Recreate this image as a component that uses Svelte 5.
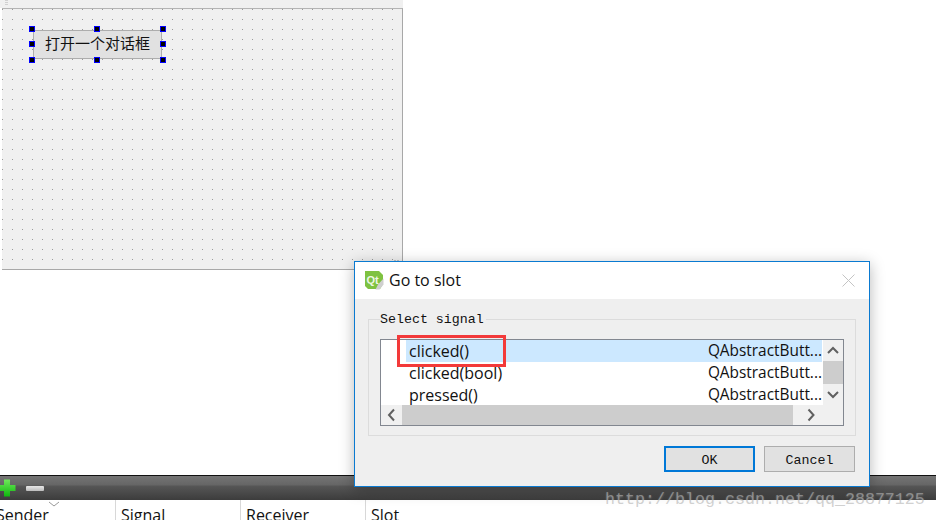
<script>
  const rows = [
    { name: 'clicked()', cls: 'QAbstractButt...', selected: true },
    { name: 'clicked(bool)', cls: 'QAbstractButt...', selected: false },
    { name: 'pressed()', cls: 'QAbstractButt...', selected: false }
  ];
  const handles = ['tl', 'tc', 'tr', 'ml', 'mr', 'bl', 'bc', 'br'];
  const columns = ['Sender', 'Signal', 'Receiver', 'Slot'];
</script>

<div class="page">
  <main class="canvas">
    <section class="designer">
      <div class="strip"><span class="grip"></span></div>
      <div class="form">
        <div class="widget">
          <button class="push">打开一个对话框</button>
          {#each handles as h}
            <span class="handle {h}"></span>
          {/each}
        </div>
        <span class="resize"></span>
      </div>
    </section>
  </main>

  <div class="toolbar">
    <svg class="plus" width="18" height="18" viewBox="0 0 18 18">
      <defs>
        <linearGradient id="gr" x1="0" y1="0" x2="0" y2="1">
          <stop offset="0" stop-color="#6fe85a" />
          <stop offset="1" stop-color="#0fb80f" />
        </linearGradient>
      </defs>
      <path d="M6 0.500h6v5.500h5.500v6H12v5.500H6V12H.5V6H6z" fill="url(#gr)" />
    </svg>
    <span class="minus"></span>
  </div>

  <div class="header">
    {#each columns as c}
      <div class="col">{c}</div>
    {/each}
    <svg class="sort" width="12" height="6" viewBox="0 0 12 6"><path d="M1 1l5 4 5-4" fill="none" stroke="#9a9a9a" /></svg>
  </div>

  <div class="dialog">
    <div class="title">
      <svg class="logo" width="19" height="19" viewBox="0 0 19 19">
        <path d="M0 0h14l4 4v9l-3 5H3l-3-3z" fill="#7fc241" />
        <text x="1.500" y="13" font-size="11" font-weight="700" fill="#eef7e4" font-family="'Liberation Sans', sans-serif">Qt</text>
        <path d="M10.500 18.500l2.500-5 5.500-6v6l-4 5z" fill="#cfcfcf" />
      </svg>
      <span class="title-text">Go to slot</span>
      <svg class="close" width="13" height="13" viewBox="0 0 13 13"><path d="M.5.500l12 12M12.500.500l-12 12" stroke="#c4c4c4" fill="none" /></svg>
    </div>
    <div class="body">
      <fieldset class="group">
        <legend>Select signal</legend>
        <div class="list">
          <div class="viewport">
            <div class="rows">
              {#each rows as r}
                <div class="row" class:selected={r.selected}>
                  <span>{r.name}</span><span class="cls">{r.cls}</span>
                </div>
              {/each}
            </div>
            <div class="vbar">
              <svg width="20" height="21" viewBox="0 0 20 21"><path d="M5 13l5-5 5 5" fill="none" stroke="#606060" stroke-width="2" /></svg>
              <div class="vthumb"></div>
              <svg class="vdown" width="20" height="21" viewBox="0 0 20 21"><path d="M5 8l5 5 5-5" fill="none" stroke="#606060" stroke-width="2" /></svg>
            </div>
          </div>
          <div class="hbar">
            <svg width="21" height="20" viewBox="0 0 21 20"><path d="M13 4.500l-5 5.500 5 5.500" fill="none" stroke="#606060" stroke-width="2" /></svg>
            <div class="hthumb"></div>
            <svg width="30" height="20" viewBox="0 0 30 20"><path d="M15.500 4.500l5 5.500-5 5.500" fill="none" stroke="#606060" stroke-width="2" /></svg>
            <div class="corner"></div>
          </div>
        </div>
      </fieldset>
      <div class="actions">
        <button class="btn primary">OK</button>
        <button class="btn">Cancel</button>
      </div>
    </div>
    <span class="mark"></span>
  </div>

  <div class="watermark">http://blog.csdn.net/qq_28877125</div>
</div>

<style>
  :global(body) { margin: 0; background: #fff; }
  .page {
    width: 936px;
    height: 520px;
    position: relative;
    overflow: hidden;
    display: flex;
    flex-direction: column;
    background: #fff;
    font-family: "Open Sans", "Noto Sans", sans-serif;
  }
  .canvas { height: 475px; flex: none; }
  .designer { width: 403px; }
  .strip { height: 8px; background: #f0f0f0; position: relative; }
  .grip {
    position: absolute;
    left: 5px;
    top: 0;
    width: 3px;
    height: 5px;
    background: repeating-linear-gradient(#d0d0d0 0 1px, transparent 1px 2px);
  }
  .form {
    position: relative;
    box-sizing: border-box;
    height: 262px;
    margin-left: 2px;
    padding: 21px 0 0 31px;
    border-top: 1px solid #b4b4b4;
    border-right: 1px solid #a8a8a8;
    border-bottom: 1px solid #a8a8a8;
    background-color: #f0f0f0;
    background-image: radial-gradient(circle at 0.5px 0.5px, #9a9a9a 0.6px, transparent 0.7px);
    background-size: 10px 10px;
    background-position: 0 0;
  }
  .widget { position: relative; width: 129px; height: 29px; }
  .push {
    width: 100%;
    height: 100%;
    padding: 0 0 4px 0;
    border: 1px solid #adadad;
    background: #e1e1e1;
    color: #111;
    font-family: "Noto Sans CJK SC", sans-serif;
    font-size: 15px;
    line-height: 20px;
  }
  .handle {
    position: absolute;
    box-sizing: border-box;
    width: 6px;
    height: 6px;
    background: #000;
    border: 1px solid #0000ff;
  }
  .tl, .tc, .tr { top: -4px; }
  .ml, .mr { top: 11px; }
  .bl, .bc, .br { top: 27px; }
  .tl, .ml, .bl { left: -4px; }
  .tc, .bc { left: 61px; }
  .tr, .mr, .br { left: 127px; }
  .resize {
    position: absolute;
    right: 2px;
    bottom: 3px;
    width: 6px;
    height: 6px;
    background: radial-gradient(circle at 1px 1px, #c2c2c2 1px, transparent 1.2px);
    background-size: 3px 3px;
  }

  .toolbar {
    box-sizing: border-box;
    height: 25px;
    flex: none;
    display: flex;
    align-items: center;
    gap: 10px;
    padding-left: 0;
    border-top: 1px solid #111;
    background: linear-gradient(#747474 0, #666 9px, #565656 10px, #3c3c3c 100%);
  }
  .plus { margin-left: -2px; }
  .minus {
    width: 18px;
    height: 5px;
    border-radius: 1px;
    background: linear-gradient(#e8e8e8, #bcbcbc);
  }

  .header {
    position: relative;
    flex: none;
    height: 20px;
    display: flex;
    font-size: 16px;
    color: #111;
    line-height: 20px;
  }
  .col {
    box-sizing: border-box;
    width: 125px;
    padding: 5px 0 0 5px;
    border-right: 1px solid #d8d8d8;
    white-space: nowrap;
  }
  .col:first-child { width: 116px; padding-left: 0; text-indent: -4px; }
  .col:last-of-type { border-right: 0; }
  .sort { position: absolute; left: 48px; top: 1px; }

  .dialog {
    position: absolute;
    left: 354px;
    top: 261px;
    width: 516px;
    height: 226px;
    box-sizing: border-box;
    display: flex;
    flex-direction: column;
    border: 1px solid #0a7ad1;
    background: #fff;
    box-shadow: 0 3px 14px rgba(0, 0, 0, 0.28);
  }
  .title {
    height: 37px;
    flex: none;
    display: flex;
    align-items: center;
    padding: 0 14px 0 10px;
    background: #fff;
  }
  .logo { flex: none; }
  .title-text { margin: -1px 0 0 5px; font-size: 16px; color: #111; flex: 1; }
  .body {
    flex: 1;
    box-sizing: border-box;
    padding: 13px 13px 0 13px;
    background: #efefef;
  }
  .group {
    position: relative;
    box-sizing: border-box;
    height: 124px;
    margin: 0;
    padding: 12px 11px 0 11px;
    border: 1px solid #dcdcdc;
    min-width: 0;
  }
  legend {
    padding: 0 2px 0 0;
    margin-left: 0;
    font-family: "Liberation Mono", monospace;
    font-size: 13.3px;
    line-height: 15px;
    color: #111;
  }
  .list {
    box-sizing: border-box;
    width: 464px;
    height: 87px;
    border: 1px solid #828790;
    background: #fff;
    display: flex;
    flex-direction: column;
  }
  .viewport { display: flex; height: 65px; flex: none; overflow: hidden; }
  .rows { flex: 1; padding-left: 25px; }
  .row {
    height: 22px;
    display: flex;
    justify-content: space-between;
    padding: 0 0 0 3px;
    font-size: 16px;
    line-height: 22px;
    color: #111;
    white-space: nowrap;
  }
  .cls { font-size: 15.4px; }
  .row.selected { background: #cce8ff; }
  .vbar {
    width: 20px;
    display: flex;
    flex-direction: column;
    background: #f0f0f0;
    flex: none;
    margin-left: 1px;
  }
  .vbar svg { display: block; flex: none; }
  .vthumb { height: 23px; flex: none; background: #cdcdcd; }
  .hbar { display: flex; height: 20px; background: #f0f0f0; flex: none; }
  .hbar svg { display: block; flex: none; }
  .hthumb { width: 391px; flex: none; background: #cdcdcd; }
  .corner { flex: 1; }
  .actions {
    display: flex;
    justify-content: flex-end;
    gap: 9px;
    padding: 10px 1px 0 0;
  }
  .btn {
    box-sizing: border-box;
    width: 91px;
    height: 26px;
    padding: 2px 0 0;
    border: 1px solid #adadad;
    background: #e1e1e1;
    font-family: "Liberation Mono", monospace;
    font-size: 13.3px;
    color: #111;
  }
  .btn.primary { border: 2px solid #0078d7; }

  .watermark {
    position: absolute;
    left: 605px;
    top: 490px;
    font-family: "Liberation Mono", monospace;
    font-size: 16.67px;
    line-height: 20px;
    color: rgba(178, 178, 178, 0.6);
    text-shadow: 0 1px 2px rgba(255, 255, 255, 0.25);
    white-space: nowrap;
    pointer-events: none;
  }
  .mark {
    position: absolute;
    left: 42px;
    top: 73px;
    width: 109px;
    height: 32px;
    box-sizing: border-box;
    border: 3px solid #f33a3a;
  }
</style>
